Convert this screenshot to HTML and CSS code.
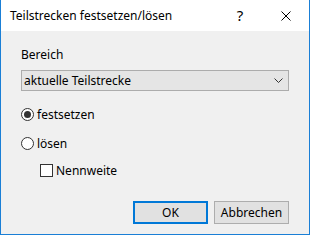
FILE: index.html
```html
<!DOCTYPE html>
<html lang="de">
<head>
    <meta charset="UTF-8">
    <title>Teilstrecken festsetzen/lösen</title>
    <link rel="stylesheet" href="styles.css">
</head>
<body>

<div class="dialog">
    <div class="titlebar">
        <span class="title">Teilstrecken festsetzen/lösen</span>
        <span class="caption-btn help">?</span>
        <span class="caption-btn">
            <svg width="10" height="10" viewBox="0 0 10 10">
                <path d="M0.5 0.5 L9.5 9.5 M9.5 0.5 L0.5 9.5" stroke="#000" stroke-width="1" fill="none"/>
            </svg>
        </span>
    </div>

    <div class="content">
        <div class="label">Bereich</div>
        <div class="combo">
            <span>aktuelle Teilstrecke</span>
            <svg width="9" height="5" viewBox="0 0 9 5">
                <polyline points="0.5,0.5 4.5,4.5 8.5,0.5" stroke="#333" stroke-width="1" fill="none"/>
            </svg>
        </div>

        <div class="option first">
            <span class="radio checked"></span>
            <span>festsetzen</span>
        </div>
        <div class="option">
            <span class="radio"></span>
            <span>lösen</span>
        </div>
        <div class="option sub">
            <span class="check"></span>
            <span>Nennweite</span>
        </div>

        <div class="buttons">
            <div class="btn default">OK</div>
            <div class="btn">Abbrechen</div>
        </div>
    </div>
</div>

</body>
</html>
```

FILE: styles.css
```css
body {
    margin: 0;
    font-family: 'Noto Sans', 'Open Sans', sans-serif;
    font-size: 12px;
    color: #000;
}

.dialog {
    width: 310px;
    height: 235px;
    box-sizing: border-box;
    border: 1px solid #1a7fd6;
    border-top: none;
    display: flex;
    flex-direction: column;
}

/* Titelleiste */
.titlebar {
    height: 31px;
    background-color: #fff;
    display: flex;
    align-items: center;
}

.title {
    flex: 1;
    padding-left: 9px;
    padding-bottom: 1px;
}

.caption-btn {
    width: 46px;
    height: 31px;
    display: flex;
    align-items: center;
    justify-content: center;
}

.caption-btn.help {
    font-size: 15px;
    padding-bottom: 1px;
    box-sizing: border-box;
}

.content {
    flex: 1;
    background-color: #f0f0f0;
    padding: 16px 20px 0 20px;
}

.label {
    line-height: 16px;
}

.combo {
    margin-top: 7px;
    height: 21px;
    box-sizing: border-box;
    border: 1px solid #acacac;
    background-color: #e5e5e5;
    display: flex;
    align-items: center;
    justify-content: space-between;
    padding: 0 5px 0 2px;
}

.option {
    display: flex;
    align-items: center;
    height: 17px;
    margin-top: 12px;
}

.option.first {
    margin-top: 15px;
}

.option.sub {
    margin-top: 10px;
    padding-left: 19px;
}

.radio,
.check {
    width: 13px;
    height: 13px;
    box-sizing: border-box;
    border: 1px solid #333;
    background-color: #fff;
    margin-right: 3px;
    display: flex;
    align-items: center;
    justify-content: center;
}

.radio {
    border-radius: 50%;
}

.radio.checked:after {
    content: "";
    width: 7px;
    height: 7px;
    border-radius: 50%;
    background-color: #333;
}

.buttons {
    display: flex;
    justify-content: flex-end;
    gap: 6px;
    margin-top: 22px;
}

.btn {
    width: 75px;
    height: 23px;
    box-sizing: border-box;
    border: 1px solid #adadad;
    background-color: #e1e1e1;
    display: flex;
    align-items: center;
    justify-content: center;
}

.btn.default {
    border: 2px solid #0078d7;
}
```
